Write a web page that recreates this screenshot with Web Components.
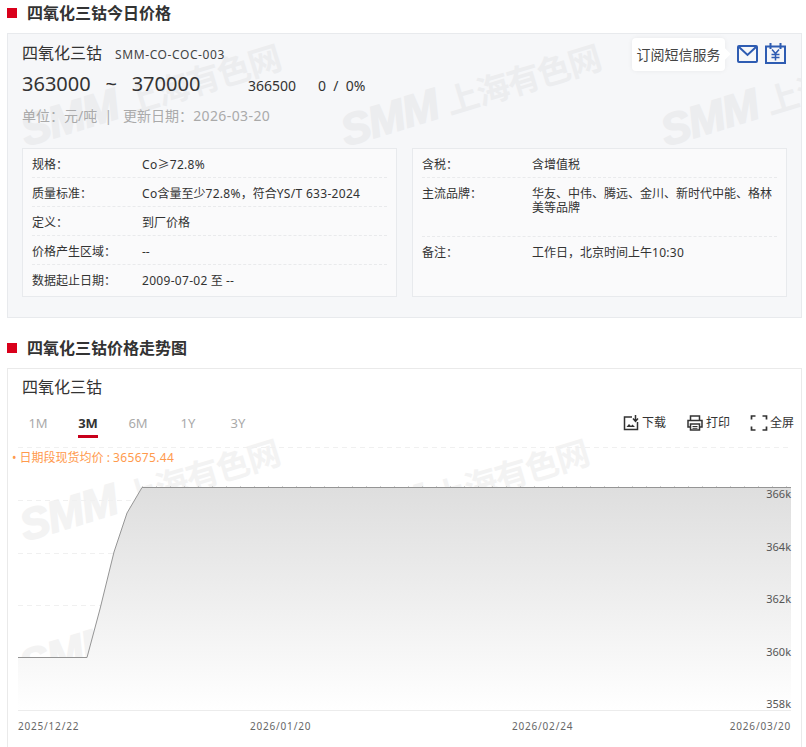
<!DOCTYPE html>
<html lang="zh"><head><meta charset="utf-8"><title>四氧化三钴</title>
<style>
html,body{margin:0;padding:0;background:#fff;overflow:hidden;height:747px}
body{font-family:"Noto Sans","Noto Sans CJK SC",sans-serif;color:#333}
x-page{height:747px;overflow:hidden}
.n{letter-spacing:.3px}
</style></head><body>
<x-page>
  <x-heading>四氧化三钴今日价格</x-heading>
  <x-price-panel>
    <x-spec-box slot="left">
      <x-spec-row label="规格："><span class="n">Co≥72.8%</span></x-spec-row>
      <x-spec-row label="质量标准："><span class="n">Co</span>含量至少<span class="n">72.8%</span>，符合<span class="n">YS/T 633-2024</span></x-spec-row>
      <x-spec-row label="定义：">到厂价格</x-spec-row>
      <x-spec-row label="价格产生区域：">--</x-spec-row>
      <x-spec-row label="数据起止日期："><span class="n">2009-07-02</span> 至 <span class="n">--</span></x-spec-row>
    </x-spec-box>
    <x-spec-box slot="right">
      <x-spec-row label="含税：">含增值税</x-spec-row>
      <x-spec-row label="主流品牌：" tall>华友、中伟、腾远、金川、新时代中能、格林美等品牌</x-spec-row>
      <x-spec-row label="备注：">工作日，北京时间上午<span class="n">10:30</span></x-spec-row>
    </x-spec-box>
  </x-price-panel>
  <x-heading class="second">四氧化三钴价格走势图</x-heading>
  <x-chart-panel></x-chart-panel>
</x-page>
<script>
const FONT='"Noto Sans","Noto Sans CJK SC",sans-serif';
function el(html){const t=document.createElement('template');t.innerHTML=html;return t.content.cloneNode(true);}
class Base extends HTMLElement{
  constructor(){super();this.attachShadow({mode:'open'});}
  render(h){this.shadowRoot.innerHTML='';this.shadowRoot.append(el(h));}
}
customElements.define('x-page',class extends Base{connectedCallback(){this.render(`<style>:host{display:block;padding:0 4px 0 7px}
::slotted(x-heading.second){margin-top:17px}</style><slot></slot>`);}});
customElements.define('x-heading',class extends Base{connectedCallback(){this.render(`<style>
:host{display:flex;align-items:center;gap:10px;height:25px;padding-top:1px;box-sizing:border-box;font:700 16px/22px ${FONT};color:#333}
i{width:10px;height:10px;background:#d9001b;display:block}
</style><i></i><span><slot></slot></span>`);}});
customElements.define('x-watermark',class extends Base{connectedCallback(){this.render(`<style>
:host{position:absolute;left:var(--x);top:var(--y);display:flex;align-items:baseline;gap:9px;white-space:nowrap;transform:rotate(-17deg);transform-origin:0 100%;color:var(--c,#ecedef);pointer-events:none}
b{font:italic 900 44px/1.300 "Liberation Sans",sans-serif;letter-spacing:-1px;-webkit-text-stroke:1.500px var(--c,#ecedef)}
span{font:700 33px/1.500 "Noto Sans CJK SC",sans-serif;letter-spacing:-1px}
</style><b>SMM</b><span>上海有色网</span>`);}});
customElements.define('x-spec-row',class extends Base{connectedCallback(){this.render(`<style>
:host{display:grid;grid-template-columns:110px 1fr;padding:9px 0 5px;min-height:14px;border-bottom:1px dashed #e9eaec;font:12px/14px ${FONT};color:#333}
:host(:last-child){border-bottom:0}
:host([tall]){min-height:44px}
.l{white-space:nowrap}
</style><div class="l">${this.getAttribute('label')}</div><div class="v"><slot></slot></div>`);}});
customElements.define('x-spec-box',class extends Base{connectedCallback(){this.render(`<style>
:host{display:block;box-sizing:border-box;height:149px;padding:0 9px;background:#fafafb;border:1px solid #e8eaed;position:relative}
</style><slot></slot>`);}});
customElements.define('x-price-panel',class extends Base{connectedCallback(){this.render(`<style>
:host{display:block;position:relative;box-sizing:border-box;height:285px;margin-top:8px;padding:8px 14px 0;background:#f6f7f9;border:1px solid #e8eaed;overflow:hidden;font-family:${FONT}}
.name{display:flex;align-items:baseline;gap:13px;font-size:16px;line-height:22px;height:22px;color:#333;position:relative}
.code{font-size:12px;color:#444;letter-spacing:.6px}
.nums{display:flex;align-items:baseline;margin-top:5px;height:30px;line-height:30px;position:relative;color:#333}
.range{font-size:20px;width:226px;white-space:pre;word-spacing:2.200px}
.last{font-size:14px;width:70px}
.chg{font-size:14px;white-space:pre}
.meta{font-size:14px;color:#aaa;height:20px;line-height:20px;margin-top:7px;white-space:pre;position:relative}
.meta .d{letter-spacing:.4px}
.boxes{display:grid;grid-template-columns:375px 375px;gap:15px;margin-top:22px;position:relative}
.sub{position:absolute;top:4px;right:76px;box-sizing:border-box;width:93px;height:33px;background:#fff;border-radius:4px;box-shadow:0 0 5px rgba(0,0,0,.06);font-size:14px;line-height:33px;text-align:center;color:#444;white-space:nowrap}
.sub:after{content:"";position:absolute;right:-4px;top:12px;width:8px;height:8px;background:#fff;transform:rotate(45deg)}
.ic{position:absolute;display:block}
</style>
<x-watermark style="--x:22px;--y:68px"></x-watermark>
<x-watermark style="--x:342px;--y:68px"></x-watermark>
<x-watermark style="--x:662px;--y:68px"></x-watermark>
<div class="name"><span>四氧化三钴</span><span class="code">SMM-CO-COC-003</span></div>
<div class="nums"><span class="range">363000  ~  370000</span><span class="last">366500</span><span class="chg">0  /  0%</span></div>
<div class="meta">单位：元/吨  |   更新日期：<span class="d">2026-03-20</span></div>
<div class="sub">订阅短信服务</div>
<svg class="ic" style="left:729px;top:11px" width="21" height="18" viewBox="0 0 21 18" fill="none" stroke="#2e5cb2" stroke-width="2"><rect x="1" y="1" width="19" height="16" rx="1"/><path d="M2 2l8.500 8L19 2"/></svg>
<svg class="ic" style="left:757px;top:9px" width="21" height="21" viewBox="0 0 21 21" fill="none" stroke="#2e5cb2"><path stroke-width="2" d="M1 3.500h19V20H1z"/><path stroke-width="2" d="M5.500 0v6M15.500 0v6"/><path stroke-width="1.500" d="M7 6.500l3.500 4 3.500-4M6.500 11.500h8M6.500 14.500h8M10.500 10.500v7"/></svg>
<div class="boxes"><slot name="left"></slot><slot name="right"></slot></div>`);}});
customElements.define('x-tool',class extends Base{connectedCallback(){this.render(`<style>
:host{display:flex;align-items:center;gap:2px;font-size:12px;line-height:20px;color:#333;white-space:nowrap}
::slotted(svg){display:block}
</style><slot name="icon"></slot><span><slot></slot></span>`);}});
customElements.define('x-tabs',class extends Base{connectedCallback(){this.render(`<style>
:host{display:flex;font-size:13px;color:#aaa}
span{width:50px;text-align:center;height:26px;line-height:26px;box-sizing:border-box;position:relative}
.on{font-weight:700;color:#333}
.on:after{content:"";position:absolute;left:15px;width:20px;bottom:-2px;height:3px;background:#c8001b}
</style><span>1M</span><span class="on">3M</span><span>6M</span><span>1Y</span><span>3Y</span>`);}});
customElements.define('x-trend',class extends Base{connectedCallback(){
const grid=[0,53,106,158,211].map(y=>`<path d="M0 ${y+.5}H773" stroke="#f0f0f0" stroke-dasharray="5 4"/>`).join('');
const ys=[['366k',40],['364k',93],['362k',145],['360k',198],['358k',250]].map(([t,y])=>`<span class="y" style="top:${y}px">${t}</span>`).join('');
const xs=[['2025/12/22',0],['2026/01/20',232],['2026/02/24',494]].map(([t,x])=>`<span class="x" style="left:${x}px">${t}</span>`).join('');
this.render(`<style>
:host{display:block;position:relative;width:773px;height:300px;font-family:${FONT}}
svg{position:absolute;left:0;top:0}
.y{position:absolute;right:0;font-size:11px;line-height:14px;color:#555}
.x{position:absolute;top:272px;font-size:10px;letter-spacing:.8px;line-height:14px;color:#666;white-space:nowrap}
.avg{position:absolute;left:-6px;top:3px;font-size:12px;line-height:16px;color:#ff9a4d;white-space:nowrap}
.avg:before{content:"•";margin-right:3px}
.avg i{font-style:normal;letter-spacing:.35px}
x-watermark{--c:#f3f3f3}
</style>
<x-watermark style="--x:11px;--y:50px"></x-watermark>
<x-watermark style="--x:320px;--y:50px"></x-watermark>
<x-watermark style="--x:11px;--y:190px"></x-watermark>
<svg width="773" height="300" viewBox="0 0 773 300">
<defs><linearGradient id="a" x1="0" y1="0" x2="0" y2="1"><stop offset="0" stop-color="#dedede"/><stop offset="1" stop-color="#fff"/></linearGradient></defs>
${grid}
<path d="M0 210.500H69L82 162 96 105 109 66 124 40.500H773V263H0z" fill="url(#a)"/>
<path d="M0 210.500H69L82 162 96 105 109 66 124 40.500H773" fill="none" stroke="#959595" stroke-width="1"/>
<path d="M124 39.500H773" stroke="#cfcfcf" stroke-dasharray="1 13"/>
<path d="M0 263.500H773" stroke="#ececec"/>
</svg>
<span class="avg">日期段现货均价 : <i>365675.44</i></span>
${ys}${xs}
<span class="x" style="right:0">2026/03/20</span>`);}});
customElements.define('x-chart-panel',class extends Base{connectedCallback(){this.render(`<style>
:host{display:block;position:relative;box-sizing:border-box;height:400px;margin-top:8px;padding:7px 0 0 0;background:#fff;border:1px solid #eaeaea;border-bottom:0;font-family:${FONT}}
.t{font-size:16px;line-height:22px;height:22px;padding-left:14px;color:#333}
.bar{display:flex;justify-content:space-between;align-items:center;height:26px;margin-top:12px;padding-right:7px;position:relative;z-index:1}
x-tabs{margin-left:5px}
.tools{display:flex;gap:20px}
x-trend{margin:11px 0 0 10px}
</style>
<div class="t">四氧化三钴</div>
<div class="bar"><x-tabs></x-tabs>
<div class="tools">
<x-tool><svg slot="icon" width="18" height="18" viewBox="0 0 18 18" fill="none" stroke="#333" stroke-width="1.500"><path d="M10 3H2.500v12.500h13V8"/><path d="M13.500 1v6M11 4.500l2.500 2.800L16 4.500"/><path d="M4.500 13l2.500-3 2 2 1.500-1.500 2.500 2.500z" fill="#333" stroke="none"/></svg>下载</x-tool>
<x-tool><svg slot="icon" width="18" height="18" viewBox="0 0 18 18" fill="none" stroke="#333" stroke-width="1.500"><path d="M4.500 6V2h9v4"/><path d="M4.500 13H2V6.500h14V13h-2.500"/><path d="M4.500 10h9v6h-9z"/><path d="M6.500 12.500h5M6.500 14.300h5" stroke-width="1"/></svg>打印</x-tool>
<x-tool><svg slot="icon" width="18" height="18" viewBox="0 0 18 18" fill="none" stroke="#333" stroke-width="1.700"><path d="M1.500 5.500v-3.500h4M12.500 2h4v3.500M16.500 12.500v3.500h-4M5.500 16h-4v-3.500"/></svg>全屏</x-tool>
</div></div>
<x-trend></x-trend>`);}});
</script>
</body></html>
